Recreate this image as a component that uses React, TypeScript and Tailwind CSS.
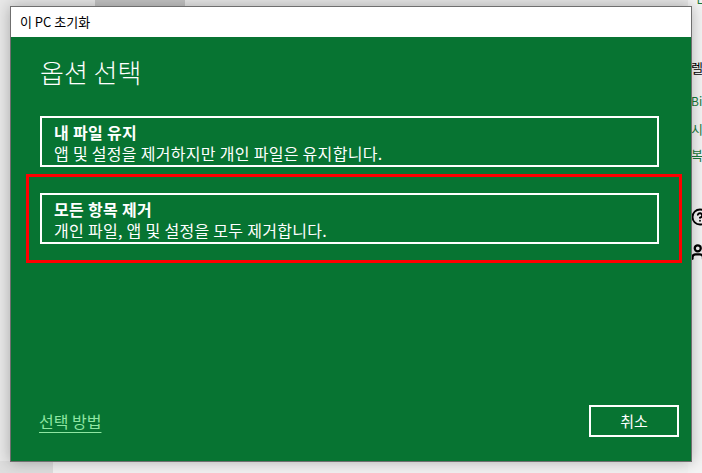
import { CircleHelp, Users } from 'lucide-react';

const font = { fontFamily: '"Noto Sans CJK KR", "Noto Sans", sans-serif' };

function OptionBox({ title, desc, highlighted }: { title: string; desc: string; highlighted?: boolean }) {
  return (
    <div className="relative w-[619px]">
      {highlighted && (
        <span className="absolute -left-[14px] -right-[23px] -top-[19px] -bottom-[19px] border-[3px] border-[#ff0000] pointer-events-none" />
      )}
      <button className="w-full h-[51px] border-2 border-white text-left pl-[12px] pt-[2px] text-white tracking-[0.3px]">
        <div className="text-[16px] leading-[21px] font-bold">{title}</div>
        <div className="text-[16px] leading-[21px]">{desc}</div>
      </button>
    </div>
  );
}

export default function App() {
  return (
    <div className="relative w-[702px] h-[473px] overflow-hidden bg-[#e8e8e8]" style={font}>
      {/* desktop behind the dialog */}
      <div className="absolute left-[95px] top-0 w-[90px] h-[6px] bg-[#c4c4c4]" />
      <div className="absolute left-0 bottom-0 w-[53px] h-[12px] bg-[#dedede]" />
      <div className="absolute left-[53px] bottom-0 right-0 h-[12px] bg-[#f2f2f2]" />
      <div className="absolute left-[688px] -top-[11px] w-[30px] h-[490px] bg-[#f4f4f4] flex flex-col items-start pl-[3px] text-[13px] leading-[16px] text-[#1a7a3a]">
        <span className="pl-[4px]">편</span>
        <span className="mt-[55px] text-black">렐</span>
        <span className="mt-[17px] text-[12px]">Bit</span>
        <span className="mt-[12px]">시</span>
        <span className="mt-[10px]">복</span>
        <CircleHelp className="mt-[45px] w-[18px] h-[18px] text-black" strokeWidth={2.5} />
        <Users className="mt-[17px] w-[18px] h-[18px] text-black" strokeWidth={3} />
      </div>

      {/* dialog */}
      <div className="absolute left-[10px] top-[6px] w-[682px] h-[456px] border border-[#6f6f6f] shadow-[0_0_14px_rgba(0,0,0,0.28)] flex flex-col">
        <div className="h-[30px] bg-white flex items-center pl-[9px] text-[13px] text-black">이 PC 초기화</div>
        <div className="flex-1 bg-[#077432] flex flex-col pl-[29px] pr-[12px] pt-[18px] pb-[24px]">
          <h1 className="text-[26px] leading-[34px] font-light text-white">옵션 선택</h1>
          <div className="mt-[27px] flex flex-col gap-[26px]">
            <OptionBox title="내 파일 유지" desc="앱 및 설정을 제거하지만 개인 파일은 유지합니다." />
            <OptionBox title="모든 항목 제거" desc="개인 파일, 앱 및 설정을 모두 제거합니다." highlighted />
          </div>
          <div className="mt-auto flex items-center justify-between">
            <a href="#" className="text-[16px] leading-[20px] text-[#8fe6a2] underline underline-offset-[4px] -ml-[1px]">
              선택 방법
            </a>
            <button className="w-[90px] h-[32px] border-2 border-white text-white text-[15px]">취소</button>
          </div>
        </div>
      </div>
    </div>
  );
}
